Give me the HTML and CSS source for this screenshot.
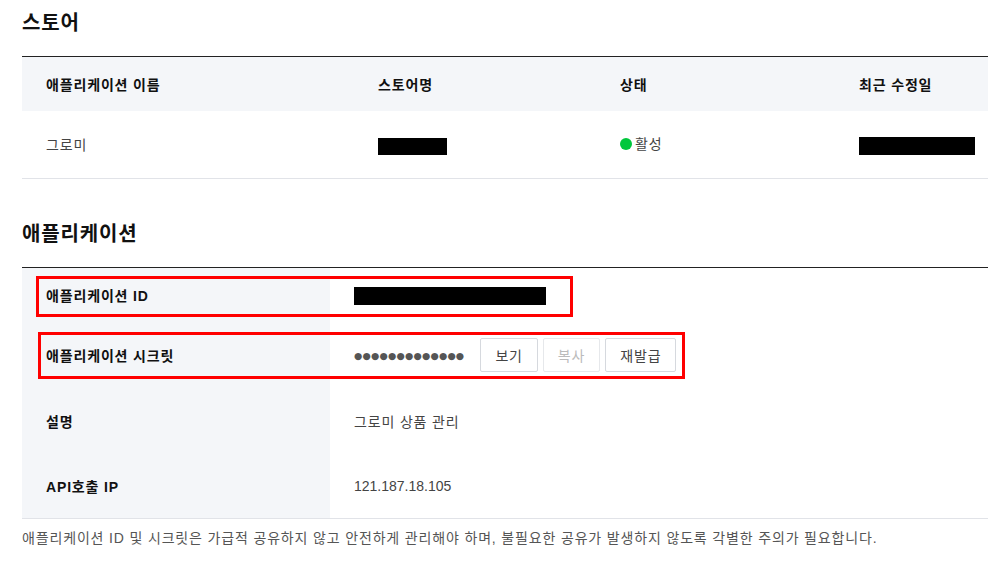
FILE: index.html
```html
<!DOCTYPE html>
<html lang="ko">
<head>
<meta charset="utf-8">
<title>스토어</title>
<link rel="stylesheet" href="styles.css">
</head>
<body>
<div class="page">
  <h2 class="section-title">스토어</h2>
  <div class="store-table">
    <div class="store-row store-head">
      <div class="cell c1">애플리케이션 이름</div>
      <div class="cell c2">스토어명</div>
      <div class="cell c3">상태</div>
      <div class="cell c4">최근 수정일</div>
    </div>
    <div class="store-row store-body">
      <div class="cell c1">그로미</div>
      <div class="cell c2"><span class="redact redact-store"></span></div>
      <div class="cell c3"><span class="status-dot"></span><span class="status-text">활성</span></div>
      <div class="cell c4"><span class="redact redact-date"></span></div>
    </div>
  </div>

  <h2 class="section-title app-title">애플리케이션</h2>
  <div class="app-table">
    <div class="app-row row-id">
      <div class="label">애플리케이션 ID</div>
      <div class="value"><span class="redact redact-id"></span></div>
      <div class="highlight hl-id"></div>
    </div>
    <div class="app-row row-secret">
      <div class="label">애플리케이션 시크릿</div>
      <div class="value">
        <span class="masked">●●●●●●●●●●●●●</span>
        <div class="btns">
          <button class="btn">보기</button>
          <button class="btn btn-disabled" disabled>복사</button>
          <button class="btn">재발급</button>
        </div>
      </div>
      <div class="highlight hl-secret"></div>
    </div>
    <div class="app-row row-desc">
      <div class="label">설명</div>
      <div class="value">그로미 상품 관리</div>
    </div>
    <div class="app-row row-ip">
      <div class="label">API호출 IP</div>
      <div class="value value-num">121.187.18.105</div>
    </div>
  </div>
  <p class="notice">애플리케이션 ID 및 시크릿은 가급적 공유하지 않고 안전하게 관리해야 하며, 불필요한 공유가 발생하지 않도록 각별한 주의가 필요합니다.</p>
</div>
</body>
</html>
```

FILE: styles.css
```css
* { box-sizing: border-box; }
html, body { margin: 0; padding: 0; background: #fff; }
body {
  font-family: "Liberation Sans", "Noto Sans CJK KR", sans-serif;
  font-size: 14px;
  letter-spacing: 0.06em;
  color: #333;
  overflow: hidden;
}
.page {
  padding: 11px 0 0 22px;
  width: 988px;
}
.section-title {
  margin: 0;
  font-size: 20px;
  line-height: 24px;
  font-weight: 700;
  color: #111;
}
.store-table {
  margin-top: 21px;
  border-top: 1px solid #222;
  border-bottom: 1px solid #e1e3e8;
}
.store-row {
  display: flex;
  align-items: center;
}
.store-head {
  height: 54px;
  background: #f4f6f9;
  font-weight: 700;
  color: #111;
}
.store-body {
  height: 67px;
  color: #444;
  padding-bottom: 2px;
}
.cell { padding-left: 24px; display: flex; align-items: center; }
.c1 { width: 332px; }
.c2 { width: 242px; }
.c3 { width: 239px; }
.c4 { flex: 1; }
.redact { display: inline-block; background: #000; }
.redact-store { width: 69px; height: 17px; margin-top: 5px; }
.redact-date { width: 116px; height: 18px; margin-top: 4px; }
.redact-id { width: 192px; height: 18px; margin-top: 2px; }
.status-dot {
  width: 12px; height: 12px; border-radius: 50%;
  background: #00c73c;
  margin-right: 3px;
}
.status-text { line-height: 20px; }

.app-title { margin-top: 43px; }
.app-table {
  margin-top: 21px;
  border-top: 1px solid #222;
  border-bottom: 1px solid #e1e3e8;
}
.app-row {
  position: relative;
  display: flex;
}
.row-id { height: 54px; }
.row-secret { height: 66px; }
.row-desc { height: 66px; }
.row-ip { height: 64px; }
.label {
  width: 308px;
  padding-left: 24px;
  background: #f4f6f9;
  font-weight: 700;
  color: #111;
  display: flex;
  align-items: center;
}
.value {
  flex: 1;
  padding-left: 24px;
  display: flex;
  align-items: center;
  color: #444;
}
.value-num { letter-spacing: 0; }
.masked {
  font-family: "DejaVu Sans", sans-serif;
  font-size: 9.5px;
  letter-spacing: 0.2px;
  color: #555;
  margin-right: 16px;
}
.btns { display: flex; gap: 5px; }
.btn {
  height: 34px;
  padding: 0 14px;
  border: 1px solid #d6d9de;
  border-radius: 2px;
  background: #fff;
  font-family: inherit;
  font-size: 14px;
  letter-spacing: 0.06em;
  color: #444;
}
.btn-disabled { color: #bbb; border-color: #e6e8eb; }
.highlight {
  position: absolute;
  border: 3px solid #ff0000;
  pointer-events: none;
}
.hl-id { left: 14px; top: 8px; width: 537px; height: 41px; }
.hl-secret { left: 16px; top: 10px; width: 647px; height: 47px; }

.notice {
  margin: 9px 0 0;
  line-height: 20px;
  font-size: 14px;
  color: #555;
}
```
